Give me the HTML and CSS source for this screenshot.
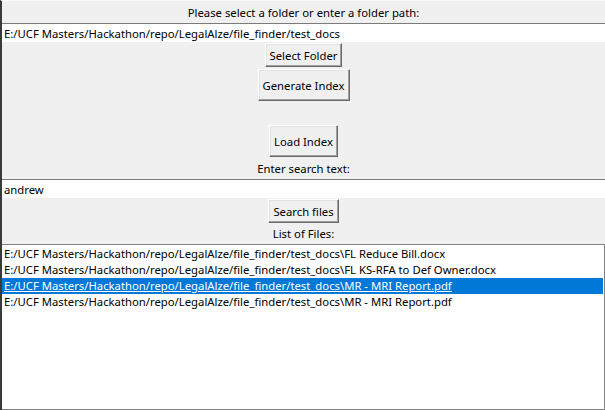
FILE: index.html
```html
<!DOCTYPE html>
<html lang="en">
<head>
  <meta charset="UTF-8" />
  <title>File Finder</title>
  <link rel="stylesheet" href="styles.css">
</head>
<body>
  <div class="app">
    <label class="caption caption-top" for="folder">Please select a folder or enter a folder path:</label>
    <input type="text" id="folder" class="field" value="E:/UCF Masters/Hackathon/repo/LegalAlze/file_finder/test_docs">
    <button class="btn">Select Folder</button>
    <button class="btn btn-tall">Generate Index</button>
    <div class="spacer"></div>
    <button class="btn btn-tall">Load Index</button>
    <label class="caption caption-search" for="search">Enter search text:</label>
    <input type="text" id="search" class="field" value="andrew">
    <button class="btn">Search files</button>
    <label class="caption caption-list">List of Files:</label>
    <ul class="file-list">
      <li>E:/UCF Masters/Hackathon/repo/LegalAlze/file_finder/test_docs\FL Reduce Bill.docx</li>
      <li>E:/UCF Masters/Hackathon/repo/LegalAlze/file_finder/test_docs\FL KS-RFA to Def Owner.docx</li>
      <li class="selected">E:/UCF Masters/Hackathon/repo/LegalAlze/file_finder/test_docs\MR - MRI Report.pdf</li>
      <li>E:/UCF Masters/Hackathon/repo/LegalAlze/file_finder/test_docs\MR - MRI Report.pdf</li>
    </ul>
  </div>
</body>
</html>
```

FILE: styles.css
```css
* {
  margin: 0;
  padding: 0;
  box-sizing: border-box;
  font-family: 'Noto Sans', sans-serif;
}
html, body {
  height: 100%;
  overflow: hidden;
}
body {
  background: #f0f0f0;
  color: #000;
  font-size: 11.3px;
}
.app {
  height: 100%;
  display: flex;
  flex-direction: column;
  align-items: center;
  border-left: 2px solid #3a3a3a;
  border-top: 1px solid #fafafa;
}
.caption {
  line-height: 20px;
  height: 20px;
}
.caption-top {
  margin-top: 2px;
}
.caption-search {
  margin-top: 2px;
}
.caption-list {
  margin-top: 1px;
}
.field {
  width: 100%;
  height: 19px;
  background: #fff;
  border: none;
  border-top: 1px solid #7a7a7a;
  padding: 0 2px;
  font-size: 11.3px;
  line-height: 18px;
  outline: none;
}
.btn {
  margin-top: 1px;
  height: 24px;
  padding: 0 4px;
  background: #f0f0f0;
  font-size: 11.3px;
  color: #000;
  border: 1px solid;
  border-color: #fff #696969 #696969 #fff;
  box-shadow: inset -1px -1px 0 #a0a0a0, inset 1px 1px 0 #e3e3e3;
}
.btn-tall {
  margin-top: 2px;
  height: 32px;
}
.spacer {
  height: 22px;
}
.file-list {
  width: 100%;
  flex: 1;
  list-style: none;
  background: #fff;
  border: 1px solid #828282;
  border-left: none;
  padding-top: 1px;
}
.file-list li {
  height: 16px;
  line-height: 16px;
  padding-left: 2px;
  margin-right: 1px;
  white-space: nowrap;
}
.file-list li.selected {
  background: #0078d7;
  color: #fff;
  text-decoration: underline;
}
```
